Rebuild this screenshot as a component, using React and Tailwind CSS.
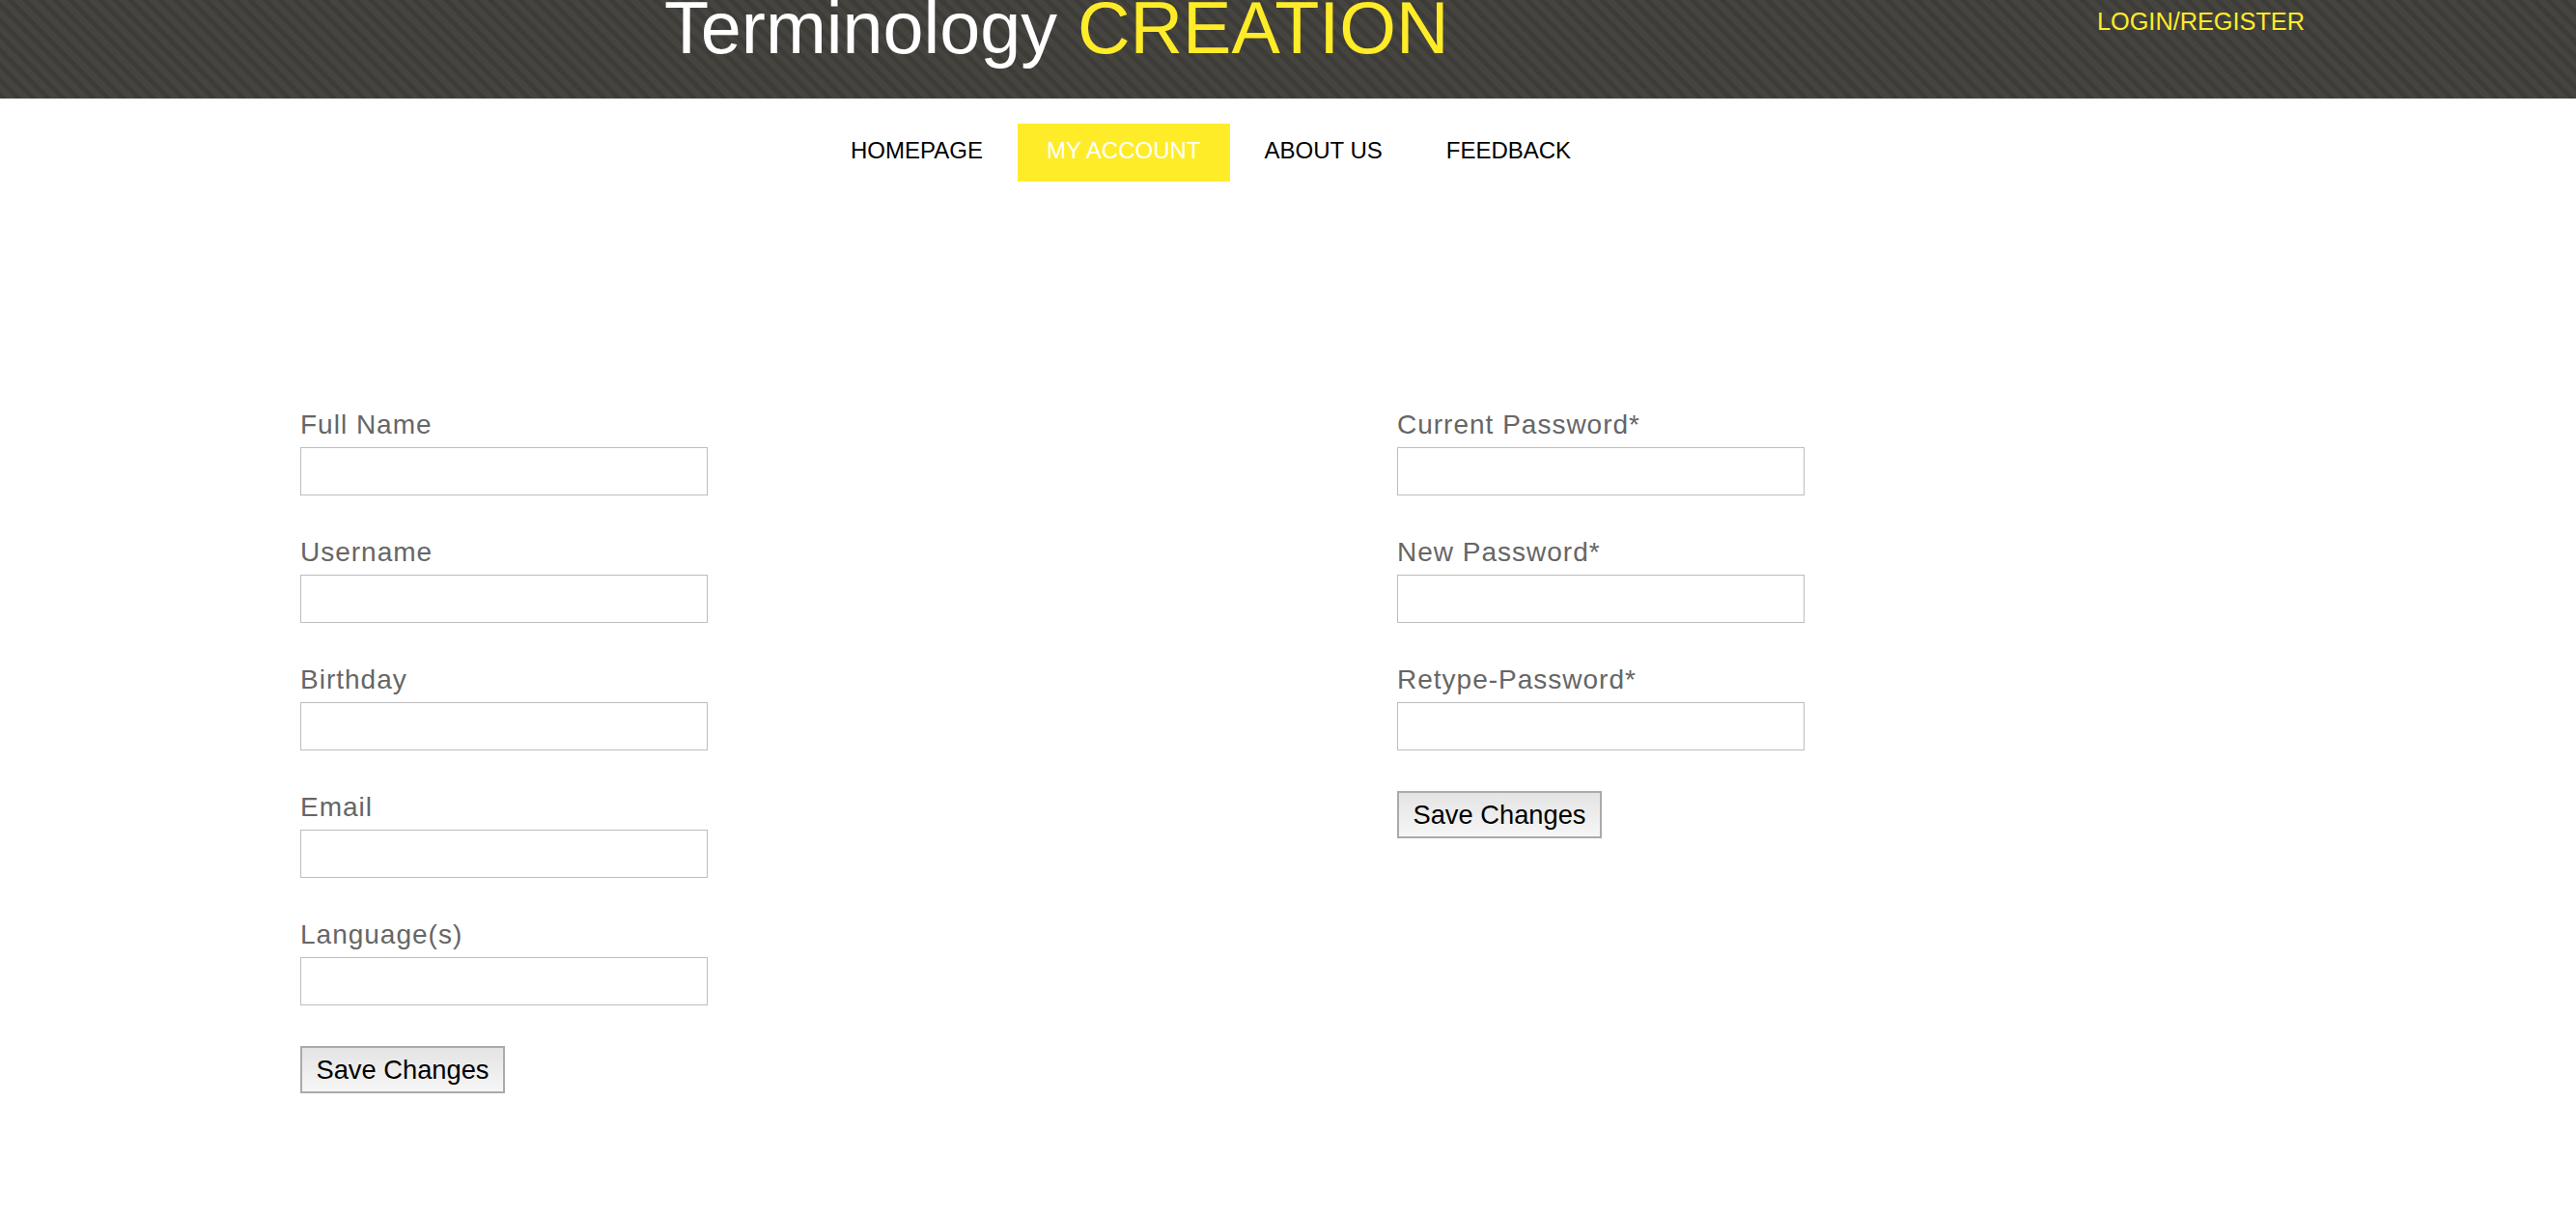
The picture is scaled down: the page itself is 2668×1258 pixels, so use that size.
const leftFields = ["Full Name", "Username", "Birthday", "Email", "Language(s)"];
const rightFields = ["Current Password*", "New Password*", "Retype-Password*"];
const navItems = ["HOMEPAGE", "MY ACCOUNT", "ABOUT US", "FEEDBACK"];

const Field = ({ label, type = "text" }) => (
  <div className="mb-[43px]">
    <label className="block text-[28px] leading-[32px] tracking-[1px] text-[#666] mb-[7px]">{label}</label>
    <input
      type={type}
      className="block w-[422px] h-[50px] border border-[#bdbdbd] bg-white px-2 text-[24px] outline-none"
    />
  </div>
);

const SaveButton = () => (
  <button className="block w-[212px] h-[49px] -mt-[1px] border-2 border-[#aaa] bg-linear-to-b from-[#e4e4e4] to-[#f6f6f6] text-[27.3px] leading-none text-black">
    Save Changes
  </button>
);

export default function App() {
  return (
    <div className="min-h-[1258px] bg-white font-['Liberation_Sans',Arial,sans-serif]">
      <header className="h-[102px] overflow-hidden flex items-start justify-between pl-[688px] pr-[281px] bg-[repeating-linear-gradient(45deg,#3d3c38_0px,#3d3c38_5px,#45443f_5px,#45443f_11px)]">
        <h1 className="-mt-[8px] text-[75.5px] leading-none text-white whitespace-nowrap">
          Terminology <span className="text-[#ffec29]">CREATION</span>
        </h1>
        <a href="#" className="mt-[10px] text-[25.3px] leading-none text-[#ffec29]">
          LOGIN/REGISTER
        </a>
      </header>

      <nav className="mt-[26px] flex gap-[6px] pl-[851px]">
        {navItems.map((item) => (
          <a
            key={item}
            href="#"
            className={
              item === "MY ACCOUNT"
                ? "h-[60px] px-[30px] pb-[5px] flex items-center bg-[#ffec29] text-white text-[24px] leading-none"
                : "h-[60px] px-[30px] pb-[5px] flex items-center text-black text-[24px] leading-none"
            }
          >
            {item}
          </a>
        ))}
      </nav>

      <main className="mt-[236px] flex pl-[311px]">
        <div className="w-[1136px]">
          {leftFields.map((f) => (
            <Field key={f} label={f} />
          ))}
          <SaveButton />
        </div>
        <div>
          {rightFields.map((f) => (
            <Field key={f} label={f} type="password" />
          ))}
          <SaveButton />
        </div>
      </main>
    </div>
  );
}
